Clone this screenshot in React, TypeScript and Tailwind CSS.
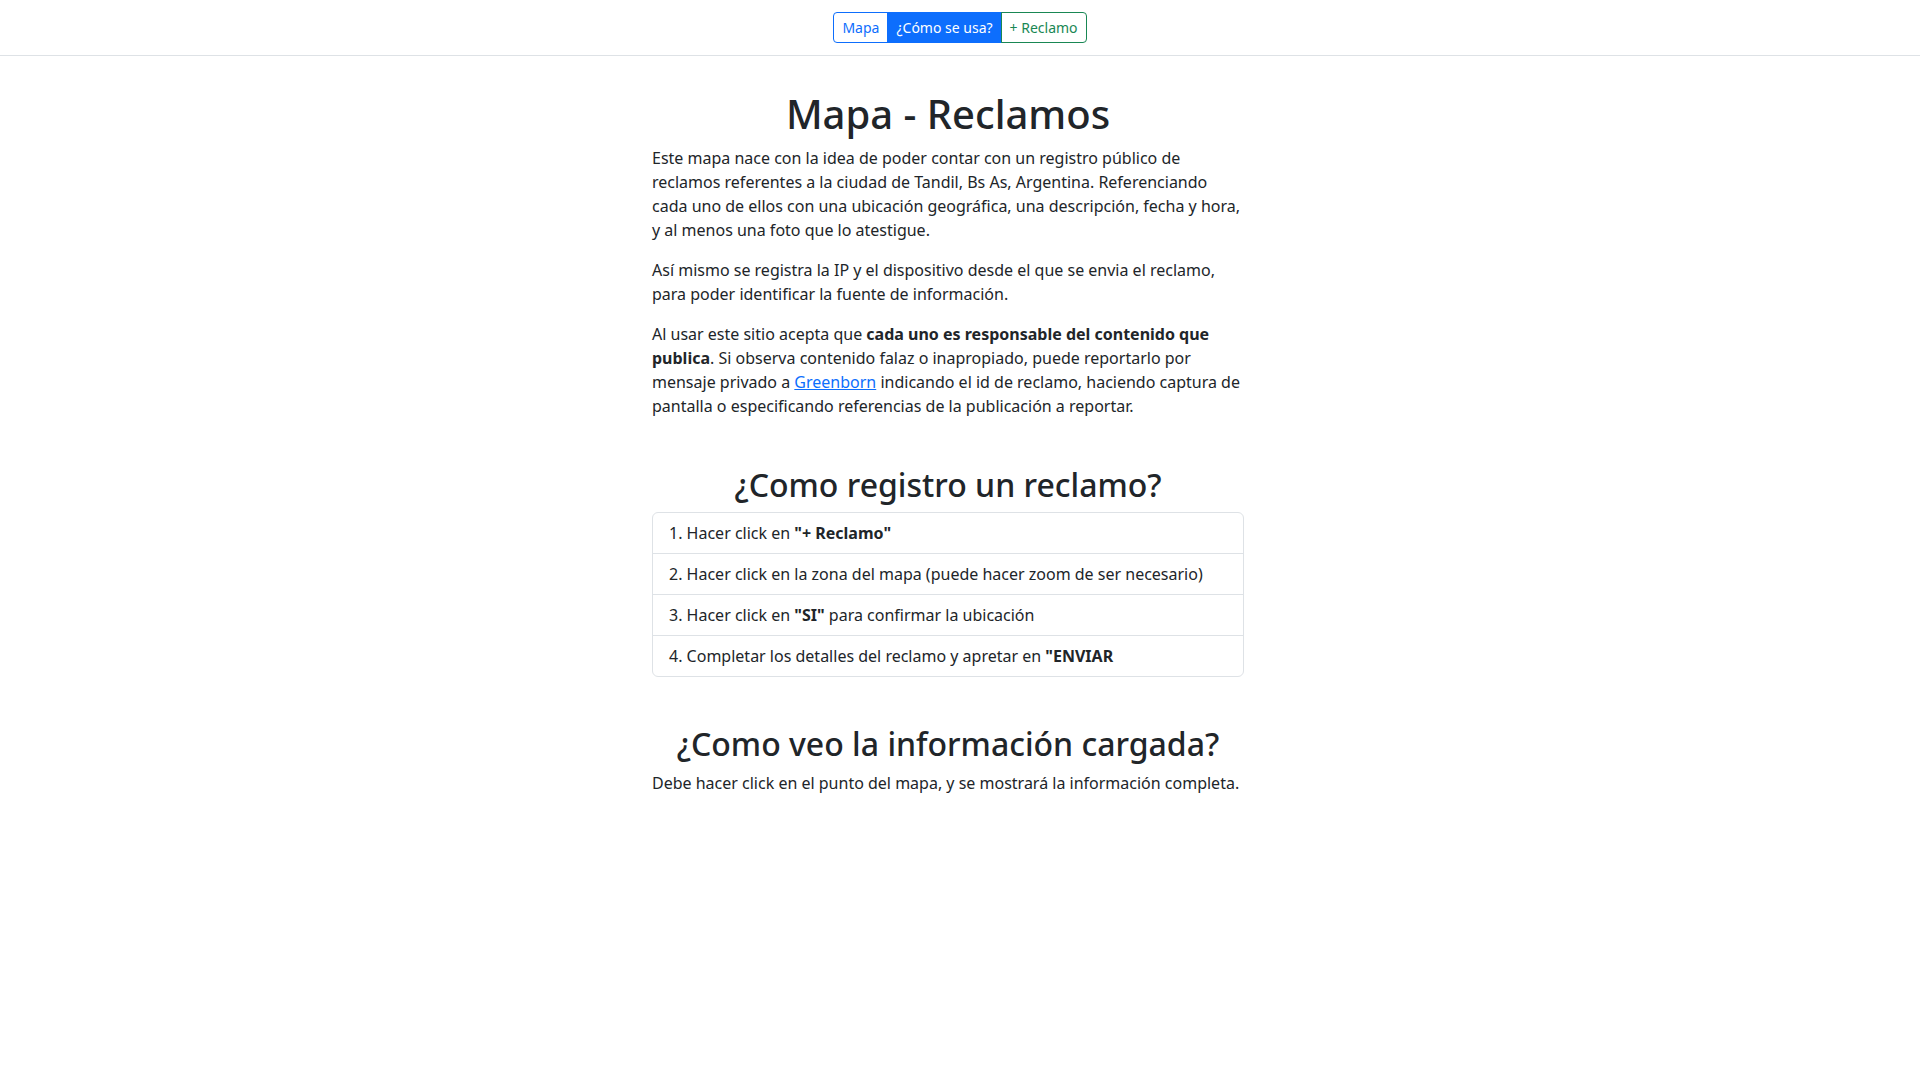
const PASOS: { n: number; before: string; bold?: string; after?: string }[] = [
  { n: 1, before: "Hacer click en ", bold: '"+ Reclamo"' },
  {
    n: 2,
    before:
      "Hacer click en la zona del mapa (puede hacer zoom de ser necesario)",
  },
  { n: 3, before: "Hacer click en ", bold: '"SI"', after: " para confirmar la ubicación" },
  {
    n: 4,
    before: "Completar los detalles del reclamo y apretar en ",
    bold: '"ENVIAR',
  },
];

export default function App() {
  return (
    <div
      className="min-h-screen bg-white text-[#212529] text-base leading-6"
      style={{ fontFamily: '"Noto Sans", "Liberation Sans", sans-serif' }}
    >
      {/* barra superior */}
      <nav className="flex justify-center border-b border-[#dee2e6] py-3">
        <div className="flex text-sm leading-[21px]">
          <button
            type="button"
            className="rounded-l border border-[#0d6efd] px-2 py-1 text-[#0d6efd]"
          >
            Mapa
          </button>
          <button
            type="button"
            className="-ml-px border border-[#0d6efd] bg-[#0d6efd] px-2 py-1 text-white"
          >
            ¿Cómo se usa?
          </button>
          <button
            type="button"
            className="-ml-px rounded-r border border-[#198754] px-2 py-1 text-[#198754]"
          >
            + Reclamo
          </button>
        </div>
      </nav>

      <main className="mx-auto w-[616px] pr-6 pt-[34px]">
        <h1 className="mb-2 text-center text-[40px] font-medium leading-[48px]">
          Mapa - Reclamos
        </h1>
        <p className="mb-4">
          Este mapa nace con la idea de poder contar con un registro público de
          reclamos referentes a la ciudad de Tandil, Bs As, Argentina.
          Referenciando cada uno de ellos con una ubicación geográfica, una
          descripción, fecha y hora, y al menos una foto que lo atestigue.
        </p>
        <p className="mb-4">
          Así mismo se registra la IP y el dispositivo desde el que se envia el
          reclamo, para poder identificar la fuente de información.
        </p>
        <p className="mb-4">
          Al usar este sitio acepta que{" "}
          <b className="font-bold">
            cada uno es responsable del contenido que publica
          </b>
          . Si observa contenido falaz o inapropiado, puede reportarlo por
          mensaje privado a{" "}
          <a href="#" className="text-[#0d6efd] underline">
            Greenborn
          </a>{" "}
          indicando el id de reclamo, haciendo captura de pantalla o
          especificando referencias de la publicación a reportar.
        </p>

        <h2 className="mb-2 mt-12 text-center text-[32px] font-medium leading-[38px]">
          ¿Como registro un reclamo?
        </h2>
        <ul className="rounded-md border border-[#dee2e6]">
          {PASOS.map((p) => (
            <li
              key={p.n}
              className="border-t border-[#dee2e6] px-4 py-2 first:border-t-0"
            >
              {p.n}. {p.before}
              {p.bold && <b className="font-bold">{p.bold}</b>}
              {p.after}
            </li>
          ))}
        </ul>

        <h2 className="mb-2 mt-12 text-center text-[32px] font-medium leading-[38px]">
          ¿Como veo la información cargada?
        </h2>
        <p className="mb-4">
          Debe hacer click en el punto del mapa, y se mostrará la información
          completa.
        </p>
      </main>
    </div>
  );
}
